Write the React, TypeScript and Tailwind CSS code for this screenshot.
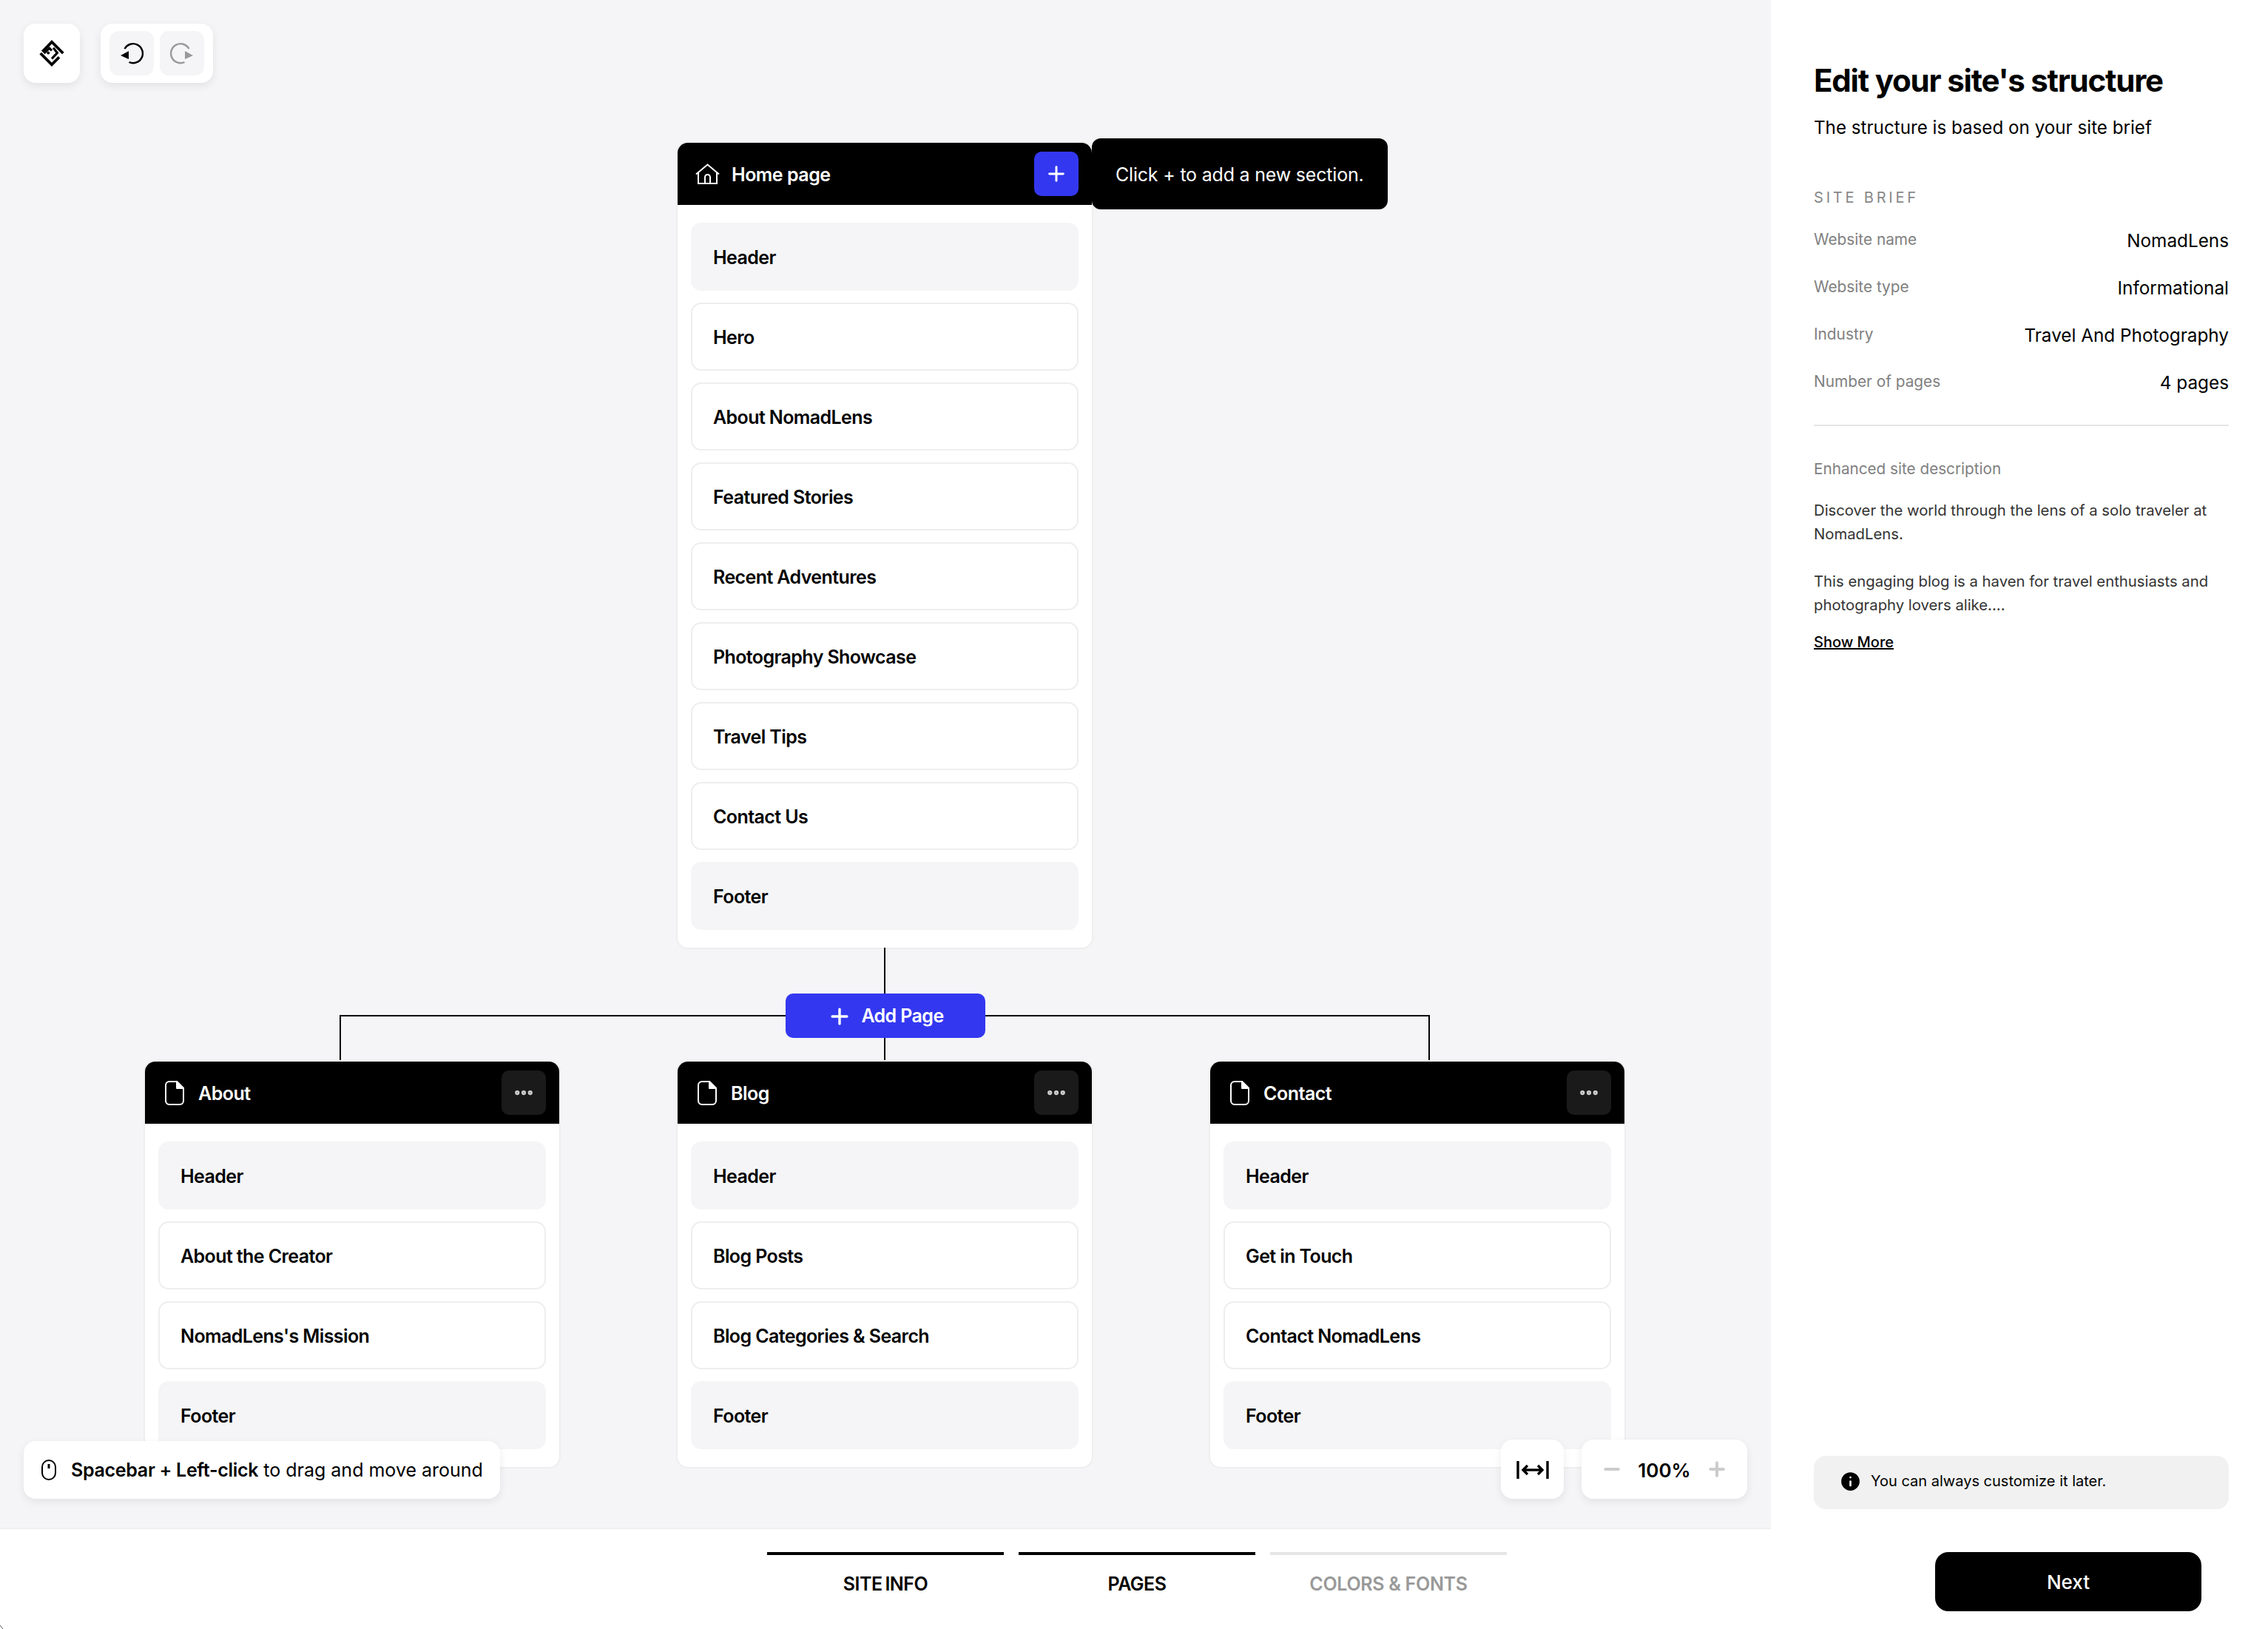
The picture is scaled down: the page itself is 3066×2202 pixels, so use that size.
import React from 'react';
import { Plus, Minus, Ellipsis, Info } from 'lucide-react';

const homeSections = [
  'Header',
  'Hero',
  'About NomadLens',
  'Featured Stories',
  'Recent Adventures',
  'Photography Showcase',
  'Travel Tips',
  'Contact Us',
  'Footer',
];

const childPages = [
  { name: 'About', sections: ['Header', 'About the Creator', "NomadLens's Mission", 'Footer'] },
  { name: 'Blog', sections: ['Header', 'Blog Posts', 'Blog Categories & Search', 'Footer'] },
  { name: 'Contact', sections: ['Header', 'Get in Touch', 'Contact NomadLens', 'Footer'] },
];

const briefRows = [
  ['Website name', 'NomadLens'],
  ['Website type', 'Informational'],
  ['Industry', 'Travel And Photography'],
  ['Number of pages', '4 pages'],
];

const steps = [
  { label: 'SITE INFO', done: true },
  { label: 'PAGES', done: true },
  { label: 'COLORS & FONTS', done: false },
];

const Logo = () => (
  <svg viewBox="0 0 36 36" className="h-[38px] w-[38px]" fill="none" stroke="#000" strokeWidth="3.6">
    <path d="M6 16 L18 3.5 L32.5 18" />
    <path d="M3.5 18 L18 32.5 L27.5 23" />
    <path d="M8 18 L15 11.5 L18 14.5" strokeWidth="3" />
    <path d="M20 11 L25 17.5 L18 25" strokeWidth="3" />
    <circle cx="13.5" cy="17.5" r="1.9" fill="#000" stroke="none" />
  </svg>
);

const UndoIcon = () => (
  <svg viewBox="0 0 32 32" className="h-[32px] w-[32px]" fill="none" stroke="#000" strokeWidth="2.4">
    <path d="M6.5 10 A13 13 0 1 1 12.5 28" />
    <path d="M1 19 L12 13 V24 Z" fill="#000" stroke="none" />
  </svg>
);

const RedoIcon = () => (
  <svg viewBox="0 0 32 32" className="h-[32px] w-[32px]" fill="none" stroke="#999999" strokeWidth="2.4">
    <path d="M25.5 10 A13 13 0 1 0 19.5 28" />
    <path d="M31 19 L20 13 V24 Z" fill="#999999" stroke="none" />
  </svg>
);

const HomeIcon = () => (
  <svg viewBox="0 0 33 28" className="h-[28px] w-[33px] shrink-0" fill="none" stroke="#fff" strokeWidth="2">
    <path d="M1 14.5 L16.5 1.5 L32 14.5" />
    <path d="M4 12 V27 H29 V12" />
    <path d="M13 27 V18.5 a3.5 3.5 0 0 1 7 0 V27" />
  </svg>
);

const FileIcon = () => (
  <svg viewBox="0 0 26 33" className="mr-[3px] ml-[3px] h-[33px] w-[26px] shrink-0" fill="none" stroke="#fff" strokeWidth="2" strokeLinejoin="round">
    <path d="M6 1 H16 L25 10 V27 a5 5 0 0 1 -5 5 H6 a5 5 0 0 1 -5 -5 V6 a5 5 0 0 1 5 -5 Z" />
    <path d="M16 1 V10 H25 Z" fill="#fff" />
  </svg>
);

const MouseIcon = () => (
  <svg viewBox="0 0 20 28" className="h-[28px] w-[20px] shrink-0" fill="none" stroke="#000" strokeWidth="2">
    <rect x="1" y="1" width="18" height="26" rx="9" />
    <path d="M10 6 V12" strokeWidth="3" />
  </svg>
);

const FitIcon = () => (
  <svg viewBox="0 0 44 24" className="mt-[2px] h-[24px] w-[44px]" fill="none" stroke="#000" strokeWidth="3.4">
    <path d="M2 0 V24 M42 0 V24" />
    <path d="M10 12 H34" />
    <path d="M15 6 L9 12 L15 18 M29 6 L35 12 L29 18" />
  </svg>
);

const SectionRow = ({ label, shaded }: { label: string; shaded: boolean }) => (
  <div
    className={
      shaded
        ? 'flex h-[92px] items-center rounded-[14px] bg-[#f5f5f7] pt-[3px] pl-[30px] text-[25px] font-semibold tracking-[-0.6px] text-black'
        : 'flex h-[92px] items-center rounded-[14px] border-2 border-[#eeeeee] bg-white pt-[3px] pl-[28px] text-[25px] font-semibold tracking-[-0.6px] text-black'
    }
  >
    {label}
  </div>
);

const PageCard = ({
  title,
  icon,
  action,
  sections,
}: {
  title: string;
  icon: React.ReactNode;
  action: React.ReactNode;
  sections: string[];
}) => (
  <div className="relative w-[560px] rounded-[14px] bg-white shadow-[0_0_0_2px_#eeeeee]">
    <div className="flex h-[84px] items-center justify-between rounded-t-[14px] bg-black pr-[18px] pl-[24px]">
      <div className="flex items-center gap-[16px] text-[25px] font-semibold tracking-[-0.5px] text-white">
        {icon}
        <span className="pt-[3px]">{title}</span>
      </div>
      {action}
    </div>
    <div className="flex flex-col gap-[16px] px-[18px] py-[24px]">
      {sections.map((s, i) => (
        <SectionRow key={s + i} label={s} shaded={i === 0 || i === sections.length - 1} />
      ))}
    </div>
  </div>
);

const MoreButton = () => (
  <button className="flex h-[60px] w-[60px] items-center justify-center rounded-[10px] bg-[#1a1a1a] text-[#d0d0d0]">
    <Ellipsis size={30} strokeWidth={3} />
  </button>
);

export default function App() {
  return (
    <div className="relative flex h-[2202px] w-[3066px] overflow-hidden bg-white font-['Inter',sans-serif] text-black">
      <div className="flex w-[2394px] shrink-0 flex-col">
        {/* canvas */}
        <div className="relative h-[2067px] overflow-hidden border-b-2 border-[#eeeeee] bg-[#f5f5f7]">
          <div className="absolute top-[32px] left-[32px] flex gap-[28px]">
            <div className="flex h-[80px] w-[76px] items-center justify-center rounded-[16px] bg-white shadow-[0_4px_12px_rgba(0,0,0,0.08)]">
              <Logo />
            </div>
            <div className="flex h-[80px] items-center gap-[8px] rounded-[16px] bg-white px-[12px] shadow-[0_4px_12px_rgba(0,0,0,0.08)]">
              <button className="flex h-[60px] w-[60px] items-center justify-center rounded-[12px] bg-[#f5f5f7]">
                <UndoIcon />
              </button>
              <button className="flex h-[60px] w-[60px] items-center justify-center rounded-[12px] bg-[#f5f5f7]">
                <RedoIcon />
              </button>
            </div>
          </div>

          {/* page tree */}
          <div className="flex flex-col items-center pt-[193px] pr-[2px]">
            <div className="relative">
              <PageCard
                title="Home page"
                icon={<HomeIcon />}
                sections={homeSections}
                action={
                  <button className="flex h-[60px] w-[60px] items-center justify-center rounded-[10px] bg-[#3338f0] text-white">
                    <Plus size={32} strokeWidth={2.2} />
                  </button>
                }
              />
              <div className="absolute top-[-6px] left-full flex h-[96px] w-[400px] items-center rounded-[12px] bg-black pt-[4px] pl-[32px] text-[25px] tracking-[-0.2px] whitespace-nowrap text-white">
                Click + to add a new section.
              </div>
            </div>

            <div className="relative flex h-[154px] w-[2000px] justify-center">
              <div className="h-full w-[2px] bg-black" />
              <div className="absolute top-[91px] right-[263px] left-[263px] h-[63px] border-x-2 border-t-2 border-black" />
              <button className="absolute top-[62px] left-[866px] flex h-[60px] w-[270px] items-center justify-center gap-[12px] rounded-[10px] bg-[#3338f0] pt-[2px] text-[25px] font-semibold tracking-[-0.6px] text-white">
                <Plus size={34} strokeWidth={2.4} />
                Add Page
              </button>
            </div>

            <div className="flex gap-[160px]">
              {childPages.map((p) => (
                <PageCard key={p.name} title={p.name} icon={<FileIcon />} sections={p.sections} action={<MoreButton />} />
              ))}
            </div>
          </div>

          <div className="absolute bottom-[39px] left-[32px] flex h-[78px] w-[644px] items-center gap-[20px] rounded-[16px] bg-white pl-[24px] text-[25px] whitespace-nowrap shadow-[0_4px_12px_rgba(0,0,0,0.08)]">
            <MouseIcon />
            <span className="pt-[2px]">
              <span className="font-semibold tracking-[-0.3px]">Spacebar + Left-click</span> to drag and move around
            </span>
          </div>

          <div className="absolute right-[32px] bottom-[39px] flex gap-[24px]">
            <div className="flex h-[80px] w-[85px] items-center justify-center rounded-[16px] bg-white shadow-[0_4px_12px_rgba(0,0,0,0.08)]">
              <FitIcon />
            </div>
            <div className="flex h-[80px] w-[224px] items-center justify-between rounded-[16px] bg-white px-[26px] shadow-[0_4px_12px_rgba(0,0,0,0.08)]">
              <Minus size={30} strokeWidth={3.2} color="#cccccc" />
              <span className="pt-[2px] text-[26px] font-semibold">100%</span>
              <Plus size={30} strokeWidth={3.2} color="#cccccc" />
            </div>
          </div>
        </div>

        {/* stepper */}
        <div className="flex flex-1 gap-[20px] pt-[31px] pl-[1037px]">
          {steps.map((s) => (
            <div key={s.label} className="w-[320px] shrink-0">
              <div className={s.done ? 'h-[4px] bg-black' : 'h-[4px] bg-[#e5e5e5]'} />
              <div
                className={
                  s.done
                    ? 'pt-[21px] text-center text-[25px] font-semibold tracking-[-0.5px] whitespace-nowrap text-black [word-spacing:-2px]'
                    : 'pt-[21px] text-center text-[25px] font-semibold tracking-[-0.3px] whitespace-nowrap text-[#999999]'
                }
              >
                {s.label}
              </div>
            </div>
          ))}
        </div>
      </div>

      {/* side panel */}
      <div className="flex w-[672px] flex-col pt-[86px] pr-[53px] pl-[58px]">
        <h1 className="text-[42px] leading-[46px] font-bold tracking-[-1.2px]">Edit your site's structure</h1>
        <p className="mt-[25px] text-[24.2px] leading-[32px]">The structure is based on your site brief</p>
        <div className="mt-[66px] text-[20px] leading-[24px] tracking-[3.8px] text-[#888888]">SITE BRIEF</div>
        <div className="mt-[27px] flex flex-col gap-[28px] border-b-2 border-[#e5e5e5] pb-[40px]">
          {briefRows.map(([k, v]) => (
            <div key={k} className="flex h-[36px] items-center justify-between">
              <span className="text-[20.8px] text-[#808080]">{k}</span>
              <span className="pt-[3px] text-[24.3px]">{v}</span>
            </div>
          ))}
        </div>
        <div className="mt-[44px] text-[20.7px] leading-[28px] text-[#808080]">Enhanced site description</div>
        <p className="mt-[26px] text-[20.3px] leading-[32px] text-[#333333]">
          Discover the world through the lens of a solo traveler at NomadLens.
        </p>
        <p className="mt-[32px] text-[20.3px] leading-[32px] text-[#333333]">
          This engaging blog is a haven for travel enthusiasts and photography lovers alike....
        </p>
        <a className="mt-[18px] text-[20px] leading-[32px] font-medium text-black underline">Show More</a>

        <div className="mt-auto flex h-[72px] items-center gap-[11px] rounded-[16px] bg-[#f1f1f1] pb-[4px] pl-[33px] text-[20px]">
          <Info size={33} fill="#000" color="#f1f1f1" strokeWidth={2} />
          You can always customize it later.
        </div>
        <div className="mt-[58px] mb-[24px] flex justify-end pr-[37px]">
          <button className="flex h-[80px] w-[360px] items-center justify-center rounded-[18px] bg-black text-[26px] font-medium text-white">
            Next
          </button>
        </div>
      </div>

      {/* cursor tip caught at the edge of the capture */}
      <svg viewBox="0 0 5 5" className="absolute bottom-0 left-0 h-[5px] w-[5px]" fill="none" stroke="#555555" strokeWidth="1">
        <path d="M0 0 L4 5" />
      </svg>
    </div>
  );
}
